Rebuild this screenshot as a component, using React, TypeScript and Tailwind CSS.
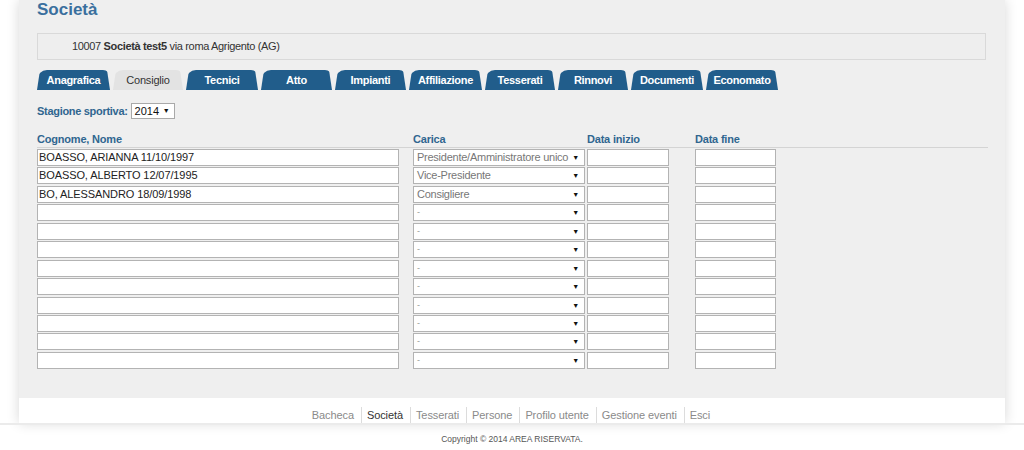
import React from "react";

const tabs: { label: string; w: number; active?: boolean }[] = [
  { label: "Anagrafica", w: 73 },
  { label: "Consiglio", w: 70, active: true },
  { label: "Tecnici", w: 72 },
  { label: "Atto", w: 71 },
  { label: "Impianti", w: 71 },
  { label: "Affiliazione", w: 73 },
  { label: "Tesserati", w: 70 },
  { label: "Rinnovi", w: 70 },
  { label: "Documenti", w: 72 },
  { label: "Economato", w: 72 },
];

const rows: { name: string; carica: string }[] = [
  { name: "BOASSO, ARIANNA 11/10/1997", carica: "Presidente/Amministratore unico" },
  { name: "BOASSO, ALBERTO 12/07/1995", carica: "Vice-Presidente" },
  { name: "BO, ALESSANDRO 18/09/1998", carica: "Consigliere" },
  ...Array.from({ length: 9 }, () => ({ name: "", carica: "-" })),
];

const links = ["Bacheca", "Società", "Tesserati", "Persone", "Profilo utente", "Gestione eventi", "Esci"];

export default function App() {
  return (
    <div className="w-[1024px] h-[450px] bg-white overflow-hidden font-['Liberation_Sans',Arial,sans-serif]">
      <div className="ml-[19px] w-[986px] shadow-[0_0_12px_rgba(0,0,0,0.16)]">
        <div className="bg-[#efefef] h-[398px] pl-[18px] pr-[17px]">
          <h1 className="text-[17px] leading-[20px] font-bold text-[#3a6f9e]">Società</h1>
          <div className="mt-[13px] mr-[2px] h-[27px] border border-[#d9d9d9] bg-[#eeeeee] flex items-center pl-[34px] text-[11px] tracking-[-0.35px] text-[#333]">
            10007&nbsp;<b>Società test5</b>&nbsp;via roma Agrigento (AG)
          </div>
          <div className="mt-[10px] flex gap-[3px] h-[20px]">
            {tabs.map((t) => (
              <div
                key={t.label}
                style={{ width: t.w }}
                className={
                  t.active
                    ? "h-[20px] flex items-center justify-center text-[11px] tracking-[-0.2px] text-[#333] bg-[#e3e3e3] rounded-tl-[10px] rounded-tr-[7px] [clip-path:polygon(0_100%,3px_0,calc(100%-3px)_0,100%_100%)]"
                    : "h-[20px] flex items-center justify-center text-[11px] tracking-[-0.3px] font-bold text-white bg-[#215d8b] rounded-tl-[10px] rounded-tr-[7px] [clip-path:polygon(0_100%,3px_0,calc(100%-3px)_0,100%_100%)]"
                }
              >
                {t.label}
              </div>
            ))}
          </div>
          <div className="mt-[13px] flex items-center h-[16px]">
            <span className="text-[11px] tracking-[-0.3px] font-bold text-[#30668f]">Stagione sportiva:</span>
            <div className="ml-[3px] w-[44px] h-[16px] bg-white border border-[#a9a9a9] flex items-center justify-between pl-[3px] pr-[4px] text-[11px] text-[#111]">
              <span>2014</span>
              <span className="text-[7px]">▼</span>
            </div>
          </div>
          <div className="mt-[13px] grid grid-cols-[376px_174px_108px_1fr] border-b border-[#d4d4d4] h-[16px] text-[11px] tracking-[-0.2px] font-bold text-[#30668f] leading-[14px]">
            <div>Cognome, Nome</div>
            <div>Carica</div>
            <div>Data inizio</div>
            <div>Data fine</div>
          </div>
          <div className="mt-[1px] flex flex-col gap-[1.45px]">
            {rows.map((r, i) => (
              <div key={i} className="grid grid-cols-[376px_174px_108px_1fr] h-[17px]">
                <div className="w-[362px] h-[17px] bg-white border border-[#b3b3b3] text-[11px] tracking-[-0.1px] text-[#222] leading-[15px] pl-[1px]">
                  {r.name}
                </div>
                <div className="w-[172px] h-[17px] bg-white border border-[#b3b3b3] text-[11px] tracking-[-0.25px] text-[#777] leading-[15px] pl-[3px] pr-[5px] flex justify-between">
                  <span className={r.carica === "-" ? "text-[9px] text-[#999]" : ""}>{r.carica}</span>
                  <span className="text-[7px] text-[#111]">▼</span>
                </div>
                <div className="w-[82px] h-[17px] bg-white border border-[#b3b3b3]" />
                <div className="w-[81px] h-[17px] bg-white border border-[#b3b3b3]" />
              </div>
            ))}
          </div>
        </div>
        <div className="bg-white h-[25px] flex justify-center items-end">
          {links.map((l, i) => (
            <div
              key={l}
              className={
                (i === 0 ? "" : "border-l border-[#dcdcdc] ") +
                "h-[16px] pt-[1px] pl-[5px] pr-[7px] text-[11px] tracking-[-0.1px] leading-[15px] " +
                (l === "Società" ? "text-[#333]" : "text-[#8a8a8a]")
              }
            >
              {l}
            </div>
          ))}
        </div>
      </div>
      <div className="border-t-2 border-[#ebebeb] pt-[8px] text-center text-[8.5px] text-[#555]">
        Copyright © 2014 AREA RISERVATA.
      </div>
    </div>
  );
}
